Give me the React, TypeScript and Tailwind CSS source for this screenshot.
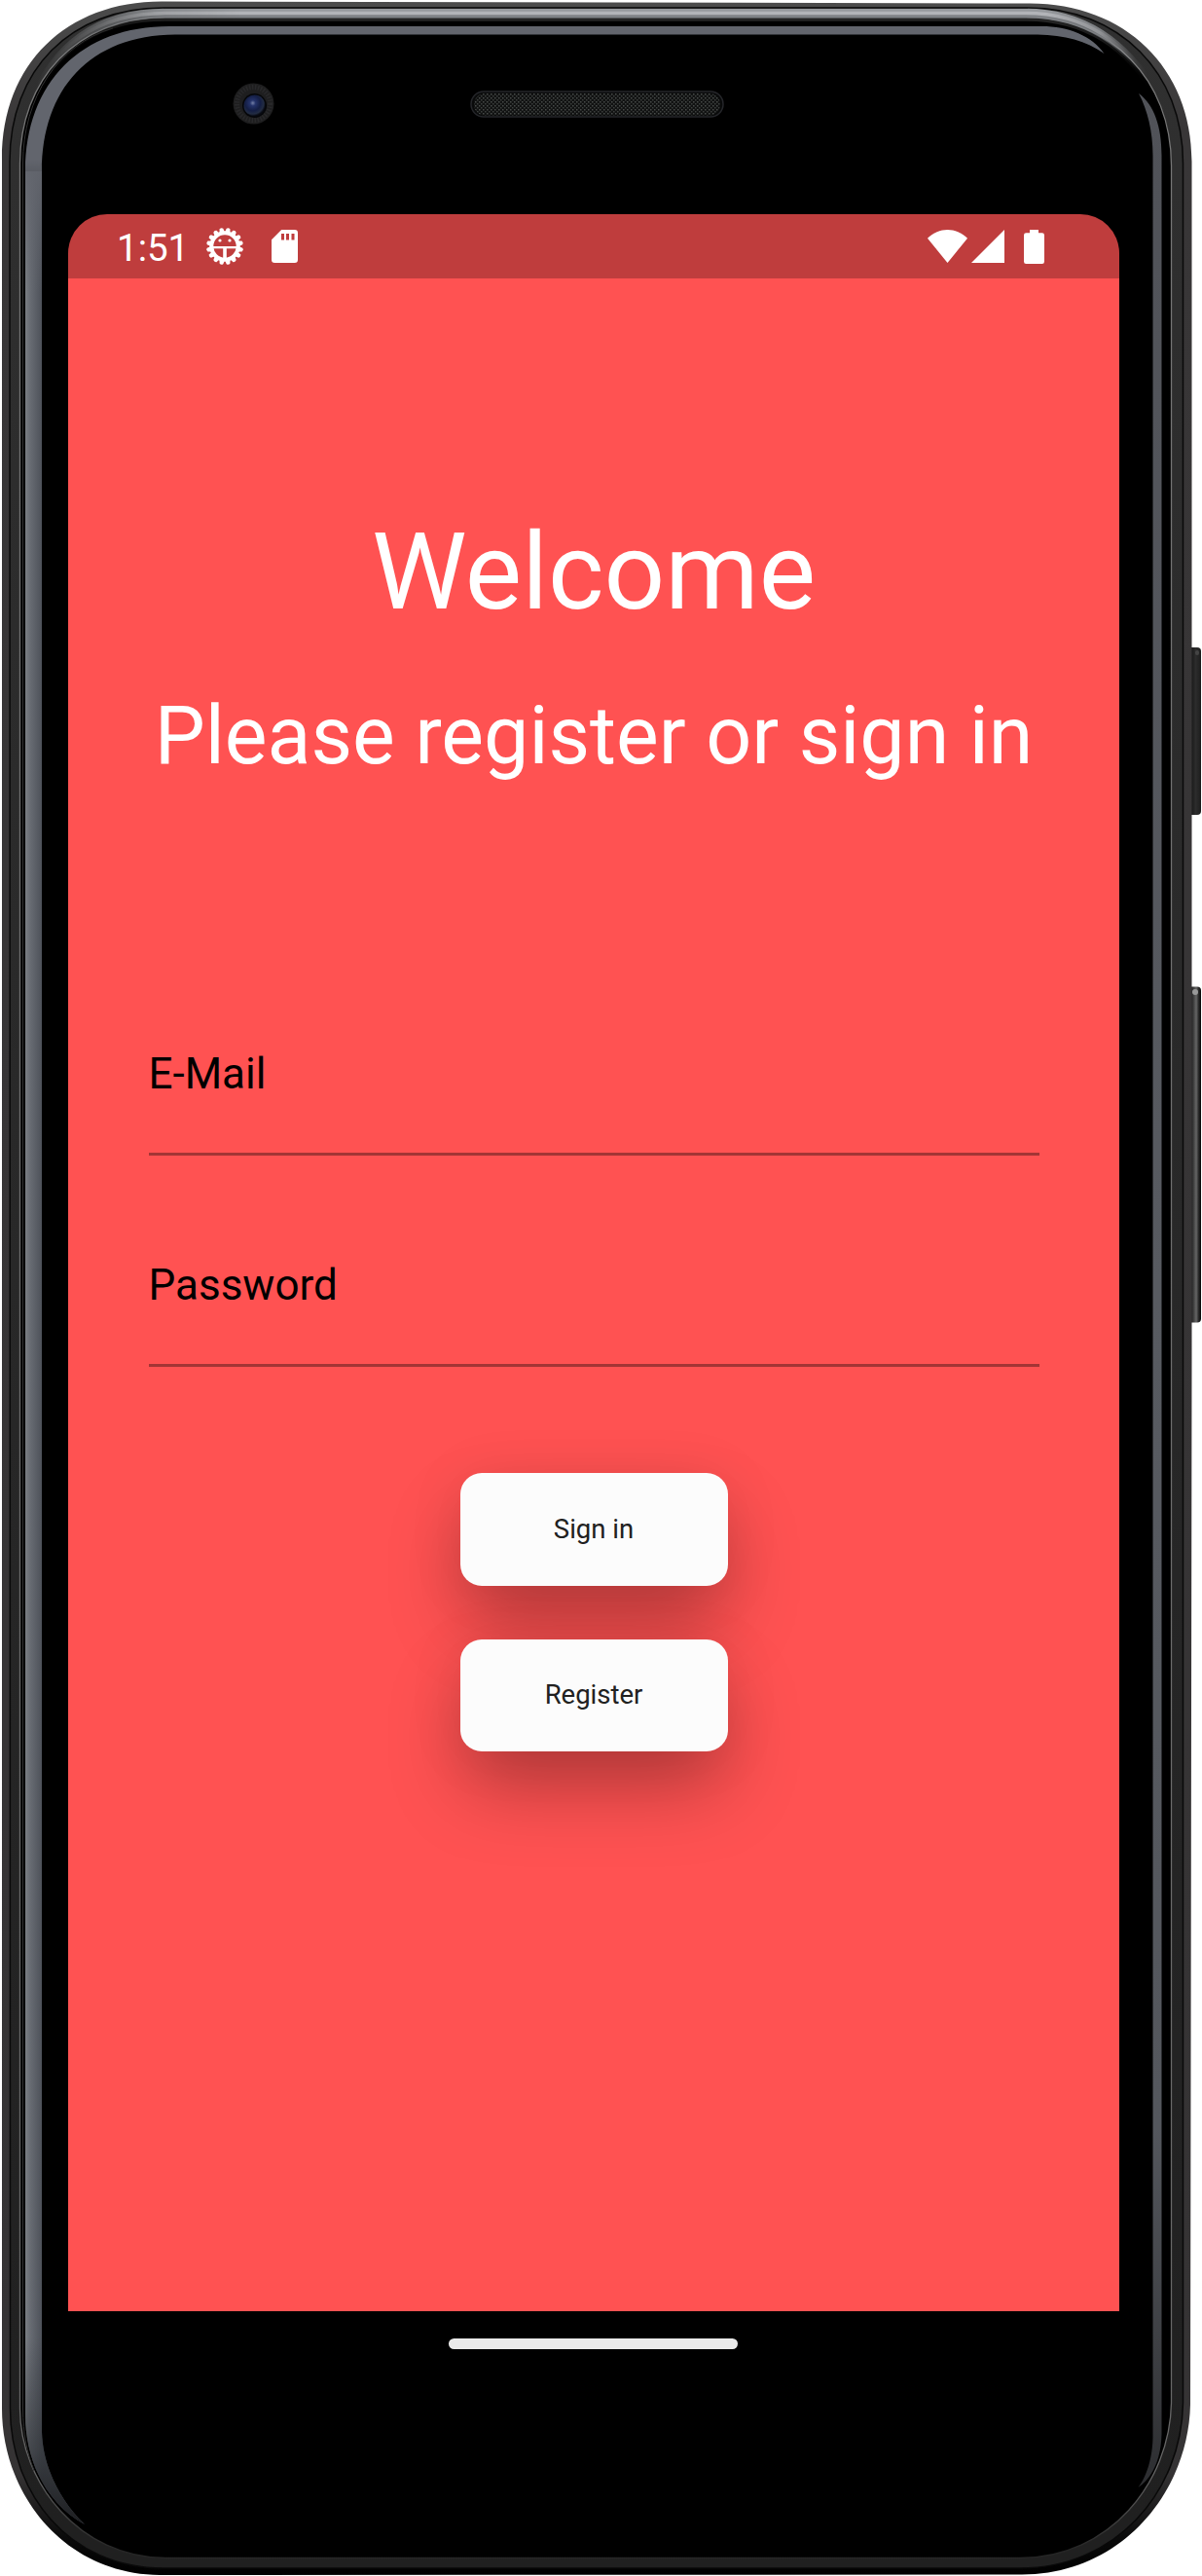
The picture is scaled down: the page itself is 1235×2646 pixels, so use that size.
function DeviceFrame() {
  return (
    <svg
      aria-hidden="true"
      className="absolute inset-0 -z-10"
      width="1235"
      height="2646"
      viewBox="0 0 1235 2646"
      fill="none"
    >
      <defs>
        <linearGradient id="rail" x1="0" y1="0" x2="0" y2="2646" gradientUnits="userSpaceOnUse">
          <stop offset="0" stopColor="#4c4c4c" />
          <stop offset="0.05" stopColor="#383637" />
          <stop offset="0.96" stopColor="#353334" />
          <stop offset="0.985" stopColor="#0a0a0a" />
          <stop offset="1" stopColor="#000" />
        </linearGradient>
        <linearGradient id="body" x1="0" y1="0" x2="0" y2="2646" gradientUnits="userSpaceOnUse">
          <stop offset="0" stopColor="#303030" />
          <stop offset="0.98" stopColor="#202020" />
          <stop offset="1" stopColor="#202020" />
        </linearGradient>
        <linearGradient id="innerLine" x1="0" y1="0" x2="0" y2="2646" gradientUnits="userSpaceOnUse">
          <stop offset="0" stopColor="#777" />
          <stop offset="0.96" stopColor="#666" />
          <stop offset="0.99" stopColor="#262626" />
        </linearGradient>
        <linearGradient id="bandFade" x1="0" y1="0" x2="1235" y2="0" gradientUnits="userSpaceOnUse">
          <stop offset="0.03" stopColor="#fff" stopOpacity="0" />
          <stop offset="0.07" stopColor="#fff" stopOpacity="0.3" />
          <stop offset="0.13" stopColor="#fff" stopOpacity="0.85" />
          <stop offset="0.2" stopColor="#fff" />
          <stop offset="0.87" stopColor="#fff" />
          <stop offset="0.915" stopColor="#fff" stopOpacity="0.75" />
          <stop offset="0.945" stopColor="#fff" stopOpacity="0.1" />
          <stop offset="0.955" stopColor="#fff" stopOpacity="0" />
        </linearGradient>
        <mask id="bandMask" maskUnits="userSpaceOnUse" x="0" y="0" width="1235" height="200">
          <rect width="1235" height="200" fill="url(#bandFade)" />
        </mask>
        <linearGradient id="glassLeft" x1="26" y1="0" x2="43" y2="0" gradientUnits="userSpaceOnUse">
          <stop offset="0" stopColor="#7b7f84" />
          <stop offset="0.3" stopColor="#686c73" />
          <stop offset="1" stopColor="#4d5159" />
        </linearGradient>
        <linearGradient id="glassTop" x1="0" y1="27" x2="0" y2="300" gradientUnits="userSpaceOnUse">
          <stop offset="0" stopColor="#62656d" />
          <stop offset="0.5" stopColor="#62656d" />
          <stop offset="1" stopColor="#62656d" stopOpacity="0" />
        </linearGradient>
        <linearGradient id="glassFade" x1="0" y1="2400" x2="0" y2="2594" gradientUnits="userSpaceOnUse">
          <stop offset="0" stopColor="#2c2f33" stopOpacity="0" />
          <stop offset="0.6" stopColor="#2c2f33" stopOpacity="0.6" />
          <stop offset="1" stopColor="#1c1d20" />
        </linearGradient>
        <linearGradient id="glassRight" x1="0" y1="96" x2="0" y2="2555" gradientUnits="userSpaceOnUse">
          <stop offset="0" stopColor="#505258" />
          <stop offset="0.5" stopColor="#585b61" />
          <stop offset="0.85" stopColor="#54575d" />
          <stop offset="0.94" stopColor="#3e4044" />
          <stop offset="1" stopColor="#2c2d30" />
        </linearGradient>
        <linearGradient id="keyFace" x1="1222" y1="0" x2="1235" y2="0" gradientUnits="userSpaceOnUse">
          <stop offset="0" stopColor="#111" />
          <stop offset="0.5" stopColor="#2c2c2c" />
          <stop offset="0.8" stopColor="#222" />
          <stop offset="1" stopColor="#101010" />
        </linearGradient>
        <linearGradient id="keyShine" x1="1221" y1="0" x2="1234" y2="0" gradientUnits="userSpaceOnUse">
          <stop offset="0" stopColor="#0d0d0d" />
          <stop offset="0.35" stopColor="#333" />
          <stop offset="0.62" stopColor="#666" />
          <stop offset="0.8" stopColor="#2c2c2c" />
          <stop offset="1" stopColor="#050505" />
        </linearGradient>
        <radialGradient id="lens" cx="0.42" cy="0.38" r="0.6">
          <stop offset="0" stopColor="#7480a8" />
          <stop offset="0.22" stopColor="#25336a" />
          <stop offset="0.6" stopColor="#141e44" />
          <stop offset="0.85" stopColor="#222c42" />
          <stop offset="1" stopColor="#080a12" />
        </radialGradient>
        <pattern id="mesh" width="4" height="4" patternUnits="userSpaceOnUse">
          <rect width="4" height="4" fill="#111212" />
          <rect width="1.5" height="1.5" fill="#484c4a" />
          <rect x="2" y="2" width="1.5" height="1.5" fill="#3c403e" />
        </pattern>
      </defs>

      {/* side keys */}
      <rect x="1220" y="665" width="14" height="172" rx="4" fill="url(#keyFace)" />
      <rect x="1228" y="668" width="4" height="5" rx="2" fill="#444" />
      <rect x="1218" y="1013.500" width="16" height="345" rx="4" fill="url(#keyShine)" />
      <rect x="1225" y="1016" width="6" height="6" rx="3" fill="#999" />

      {/* metal rail and body */}
      <path d="M2 163C2 66 68 1.500 166 1.500L1058 3.500C1156 3.500 1224.500 70 1224.500 166V1400L1223 2470C1221 2560 1152 2644.500 1050 2644.500L164 2645C66 2644 2 2562 2 2474Z" fill="url(#rail)" />
      <path d="M10 166C10 72 72 8 168 8H1056C1150 8 1215.500 74 1215.500 168V2468C1214 2560 1146 2638 1048 2638H168C70 2638 10.500 2560 10.500 2474Z" fill="url(#body)" stroke="#090909" strokeWidth="1.500" />
      <path d="M20.500 168C20.500 82 78 18 170 18H1054C1142 18 1203.500 82 1203.500 170V2468C1202 2550 1140 2627.500 1048 2627.500H170C82 2627.500 20.500 2550 20.500 2474Z" fill="#000" stroke="url(#innerLine)" strokeWidth="1.300" />
      <path d="M23.500 480V168C23.500 100 60 45 116 29M23.500 480V2474C23.500 2500 28 2520 35 2538" stroke="#333" strokeWidth="1" />

      {/* reflection along the top edge */}
      <g mask="url(#bandMask)">
        <path d="M32 118C58 50 105 23.500 170 23.500H1054C1115 23.500 1160 54 1188 106" stroke="#000" strokeWidth="4" />
        <path d="M31 115C57 47 105 20 170 20H1054C1115 20 1160 50 1189 104" stroke="#242424" strokeWidth="3.500" />
        <path d="M30 112C56 44 105 16.500 170 16.500H1054C1115 16.500 1160 47 1190 101" stroke="#7f8286" strokeWidth="4" />
        <path d="M29 110C55 40 105 11 170 11H1054C1115 11 1160 44 1191 98" stroke="#96999d" strokeWidth="4.500" />
        <path d="M29 111C55 42 105 13.500 170 13.500H1054C1115 13.500 1160 45 1190 99" stroke="#b2b4b8" strokeWidth="3.500" />
      </g>
      <path d="M168 8H1056" stroke="#181818" strokeWidth="1.500" />

      {/* glass edge highlights */}
      <path d="M26 176H43V2498C44 2532 60 2567 87 2593C48 2572 26 2528 26 2480Z" fill="url(#glassLeft)" />
      <path d="M26 2400H43V2498C44 2532 60 2567 87 2593C48 2572 26 2528 26 2480Z" fill="url(#glassFade)" />
      <path d="M26 300V176C26 84 84 27 174 27H1070C1098 27 1122 37 1134.500 55C1116 42 1094 36 1066 35.500H180C92 36 43 92 43 176V300Z" fill="url(#glassTop)" />
      <path d="M1170 96C1186 108 1193.500 130 1193.500 160V2500C1193 2526 1184 2545 1169.500 2555C1179 2542 1184 2524 1184.500 2504V160C1184.500 135 1179 113 1170 96Z" fill="url(#glassRight)" />

      {/* camera */}
      <circle cx="260.500" cy="106.500" r="21" fill="#1e1e1f" />
      <circle cx="260.500" cy="106.500" r="17" stroke="#28282a" strokeWidth="5" strokeDasharray="1.500 1.500" />
      <circle cx="261.500" cy="108.500" r="12.500" fill="#050609" />
      <circle cx="261.500" cy="108.500" r="11" fill="url(#lens)" />

      {/* speaker */}
      <rect x="484" y="94" width="259" height="26" rx="13" fill="#090a0a" stroke="#25262a" strokeWidth="1.500" />
      <rect x="487" y="96" width="253" height="22.500" rx="11" fill="url(#mesh)" />
    </svg>
  );
}

function BugGearIcon() {
  const teeth = Array.from({ length: 16 }, (_, i) => i * 22.5 + 11.25);
  return (
    <svg className="ml-[17px]" width="40" height="40" viewBox="-20 -20 40 40" fill="none">
      {teeth.map((angle) => (
        <path key={angle} d="M-2.800 -14L-1.900 -18.200Q0 -19.900 1.900 -18.200L2.800 -14Z" fill="#fff" transform={`rotate(${angle})`} />
      ))}
      <circle r="13.700" stroke="#fff" strokeWidth="4" />
      <path d="M-13 1.200H13" stroke="#fff" strokeWidth="2.200" />
      <path d="M0 1V14" stroke="#fff" strokeWidth="3.600" />
      <circle cx="-5" cy="-6" r="1.600" fill="#fff" />
      <circle cx="5" cy="-6" r="1.600" fill="#fff" />
    </svg>
  );
}

function SdCardIcon() {
  return (
    <svg className="ml-[28px]" width="27" height="34" viewBox="0 0 27 34">
      <path fill="#fff" fillRule="evenodd" d="M10.200 0H23.700Q27 0 27 3.300V30.700Q27 34 23.700 34H3.300Q0 34 0 30.700V10.200ZM10 4V10.500H13V4ZM15 4V10.500H18V4ZM20.500 4V10.500H23.500V4Z" />
    </svg>
  );
}

function StatusBar() {
  return (
    <div className="flex h-[66px] items-center bg-[#bf3d3d] pl-[50px] pr-[77px] text-white">
      <span className="pt-[3px] text-[38.5px] leading-[63px]">1:51</span>
      <BugGearIcon />
      <SdCardIcon />
      <svg className="ml-auto" width="41" height="34" viewBox="0 0 41 34">
        <path fill="#fff" d="M0 8.700C11.500 -2.900 29.500 -2.900 41 8.700L20.500 34Z" />
      </svg>
      <svg className="ml-[4px]" width="34" height="34" viewBox="0 0 34 34">
        <path fill="#fff" d="M34 0V34H0Z" />
      </svg>
      <svg className="ml-[20px]" width="21" height="35" viewBox="0 0 21 35">
        <path fill="#fff" d="M6 0H15V3.300H18.700Q21 3.300 21 5.600V32.700Q21 35 18.700 35H2.300Q0 35 0 32.700V5.600Q0 3.300 2.300 3.300H6Z" />
      </svg>
    </div>
  );
}

function Field({ label }: { label: string }) {
  return (
    <div className="h-[171px] border-b-[3px] border-[#a33535]">
      <label className="block pt-[61px] text-[44px] leading-[52px] text-black">{label}</label>
    </div>
  );
}

function ActionButton({ label }: { label: string }) {
  return (
    <button className="h-[115.5px] w-[275px] rounded-[22px] bg-[#fcfcfc] pb-[1px] text-[27.5px] leading-none text-[#212121] shadow-[0_42px_80px_-6px_rgba(0,0,0,0.3),0_4px_60px_rgba(0,0,0,0.08)]">
      {label}
    </button>
  );
}

export default function App() {
  return (
    <div className="relative isolate h-[2646px] w-[1235px] overflow-hidden bg-white pl-[70px] pt-[220px] font-['Roboto',sans-serif]">
      <DeviceFrame />
      <div className="flex h-[2220px] w-[1080px] flex-col overflow-hidden rounded-t-[40px] bg-black">
        <StatusBar />
        <main className="flex flex-1 flex-col items-center bg-[#ff5252]">
          <h1 className="mt-[237px] text-[110px] leading-[129px] text-white">Welcome</h1>
          <h2 className="mt-[55px] whitespace-nowrap text-[82.5px] leading-[97px] text-white">
            Please register or sign in
          </h2>
          <form className="mt-[212px] flex w-[915px] flex-col gap-[46px]">
            <Field label="E-Mail" />
            <Field label="Password" />
          </form>
          <div className="mt-[109px] flex flex-col gap-[55px]">
            <ActionButton label="Sign in" />
            <ActionButton label="Register" />
          </div>
        </main>
        <nav className="flex h-[66px] items-center justify-center bg-black pr-[2px]">
          <div className="h-[11px] w-[297px] rounded-full bg-[#eaeaea]" />
        </nav>
      </div>
    </div>
  );
}
